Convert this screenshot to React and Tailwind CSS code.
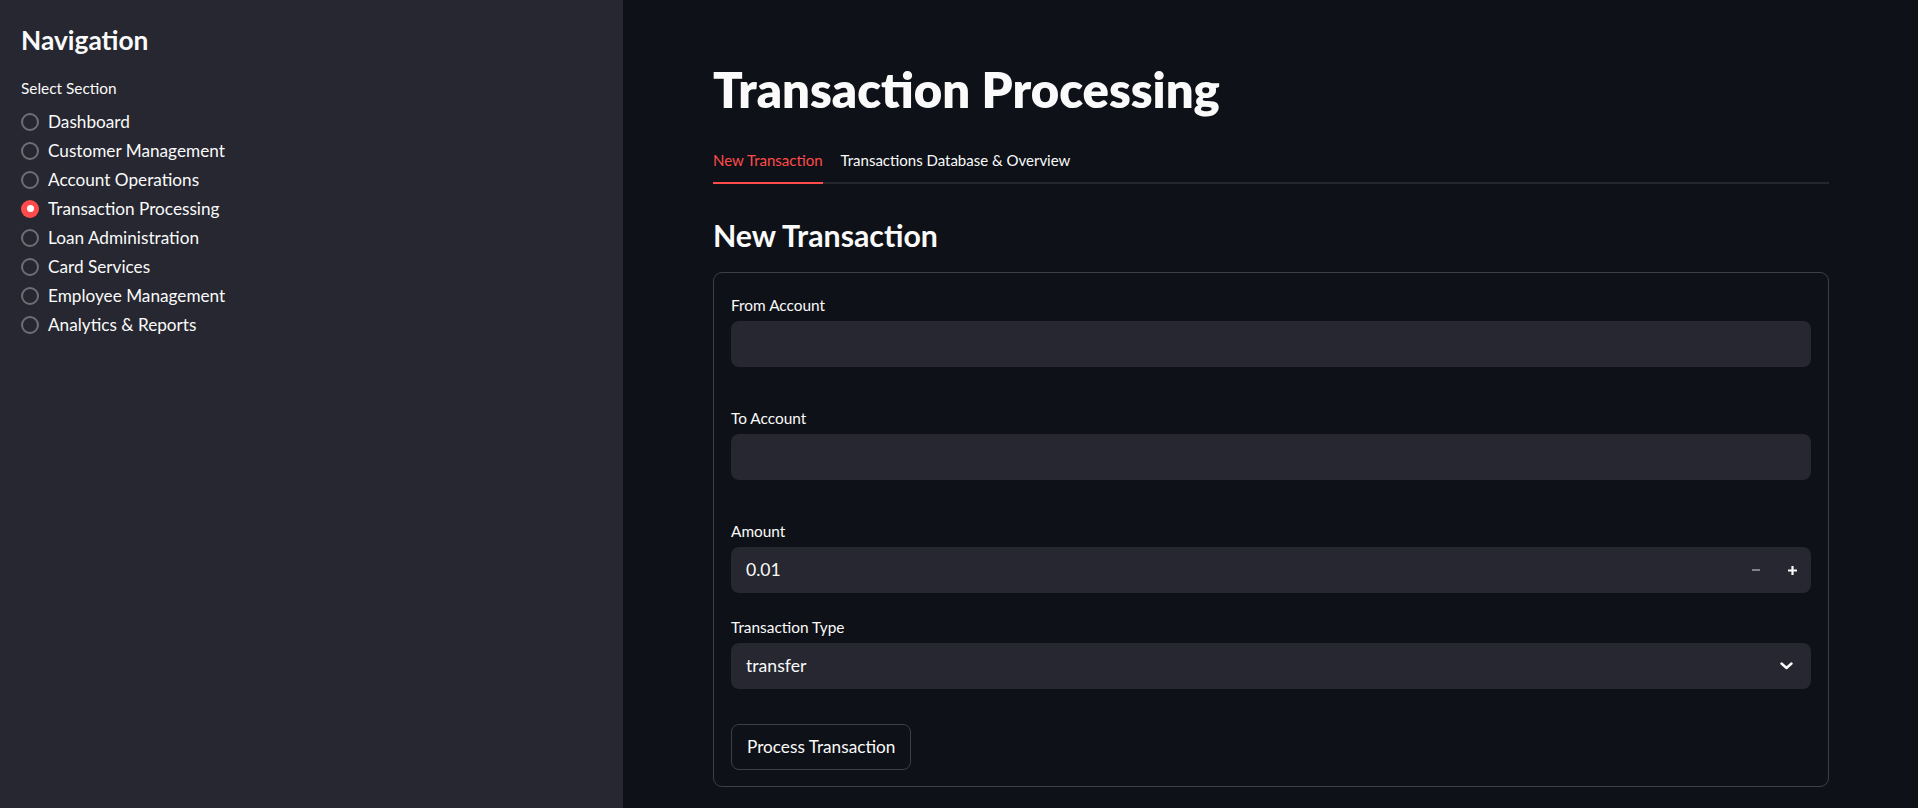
import React from "react";

const navItems = [
  "Dashboard",
  "Customer Management",
  "Account Operations",
  "Transaction Processing",
  "Loan Administration",
  "Card Services",
  "Employee Management",
  "Analytics & Reports",
];

function Radio({ label, checked }) {
  return (
    <div className="flex items-center h-[29px]">
      {checked ? (
        <span className="w-[18px] h-[18px] rounded-full bg-[#ff4b4b] flex items-center justify-center">
          <span className="w-[7px] h-[7px] rounded-full bg-white" />
        </span>
      ) : (
        <span className="w-[18px] h-[18px] rounded-full border-2 border-[#6d6e76]" />
      )}
      <span className="ml-[9px] text-[17.2px] leading-[22px] text-[#fafafa]">{label}</span>
    </div>
  );
}

function Label({ children }) {
  return <div className="text-[15.4px] leading-[20px] text-[#fafafa]">{children}</div>;
}

export default function App() {
  return (
    <div
      className="flex w-full h-[808px] overflow-hidden"
      style={{ fontFamily: "Lato, 'Noto Sans', sans-serif" }}
    >
      <aside className="w-[623px] shrink-0 bg-[#262730] pl-[21px] pt-[20px]">
        <h2 className="text-[26.3px] leading-[40px] font-bold text-[#fafafa]">Navigation</h2>
        <div className="mt-[18px] text-[15.4px] leading-[20px] text-[#fafafa]">Select Section</div>
        <div className="mt-[9px] flex flex-col">
          {navItems.map((n) => (
            <Radio key={n} label={n} checked={n === "Transaction Processing"} />
          ))}
        </div>
      </aside>
      <main className="flex-1 bg-[#0e1117] pl-[90px] pt-[59px]">
        <div className="w-[1116px]">
          <h1 className="text-[49px] leading-[60px] font-extrabold text-[#fafafa]">Transaction Processing</h1>
          <div className="mt-[31px] relative">
            <div className="flex gap-[18px]">
              <div className="relative pb-[12px]">
                <span className="block text-[15px] leading-[20px] text-[#ff4b4b]">New Transaction</span>
                <span className="absolute left-0 right-0 bottom-[-2px] h-[2px] bg-[#ff4b4b] z-10" />
              </div>
              <div className="pb-[12px]">
                <span className="block text-[15px] leading-[20px] text-[#fafafa]">Transactions Database &amp; Overview</span>
              </div>
            </div>
            <div className="h-[2px] bg-[#26272e]" />
          </div>
          <h3 className="mt-[31px] text-[30.3px] leading-[40px] font-bold text-[#fafafa]">New Transaction</h3>
          <div className="mt-[17px] border border-[#3d3f45] rounded-[9px] px-[17px] pt-[22px] pb-[16px]">
            <Label>From Account</Label>
            <div className="mt-[6px] h-[46px] rounded-[8px] bg-[#262730]" />
            <div className="mt-[41px]">
              <Label>To Account</Label>
            </div>
            <div className="mt-[6px] h-[46px] rounded-[8px] bg-[#262730]" />
            <div className="mt-[41px]">
              <Label>Amount</Label>
            </div>
            <div className="mt-[6px] h-[46px] rounded-[8px] bg-[#262730] flex items-center">
              <span className="flex-1 pl-[15px] text-[17.6px] text-[#fafafa]">0.01</span>
              <span className="w-[37px] h-full flex items-center justify-center">
                <svg width="10" height="10" viewBox="0 0 10 10">
                  <path d="M1 5H9" stroke="#7f818a" strokeWidth="2" />
                </svg>
              </span>
              <span className="w-[37px] h-full flex items-center justify-center">
                <svg width="11" height="11" viewBox="0 0 11 11">
                  <path d="M1 5.5H10M5.5 1V10" stroke="#fafafa" strokeWidth="2.2" />
                </svg>
              </span>
            </div>
            <div className="mt-[24px]">
              <Label>Transaction Type</Label>
            </div>
            <div className="mt-[6px] h-[46px] rounded-[8px] bg-[#262730] flex items-center justify-between pl-[15px] pr-[18px]">
              <span className="text-[17.6px] text-[#fafafa]">transfer</span>
              <svg width="13" height="8" viewBox="0 0 13 8">
                <path d="M1.5 1.5L6.5 6L11.5 1.5" stroke="#fafafa" strokeWidth="2.4" fill="none" strokeLinecap="round" strokeLinejoin="round" />
              </svg>
            </div>
            <button className="mt-[35px] h-[46px] px-[15px] rounded-[8px] border border-[#3d3f45] bg-[#0e1117] text-[17.2px] text-[#fafafa]">
              Process Transaction
            </button>
          </div>
        </div>
      </main>
    </div>
  );
}
